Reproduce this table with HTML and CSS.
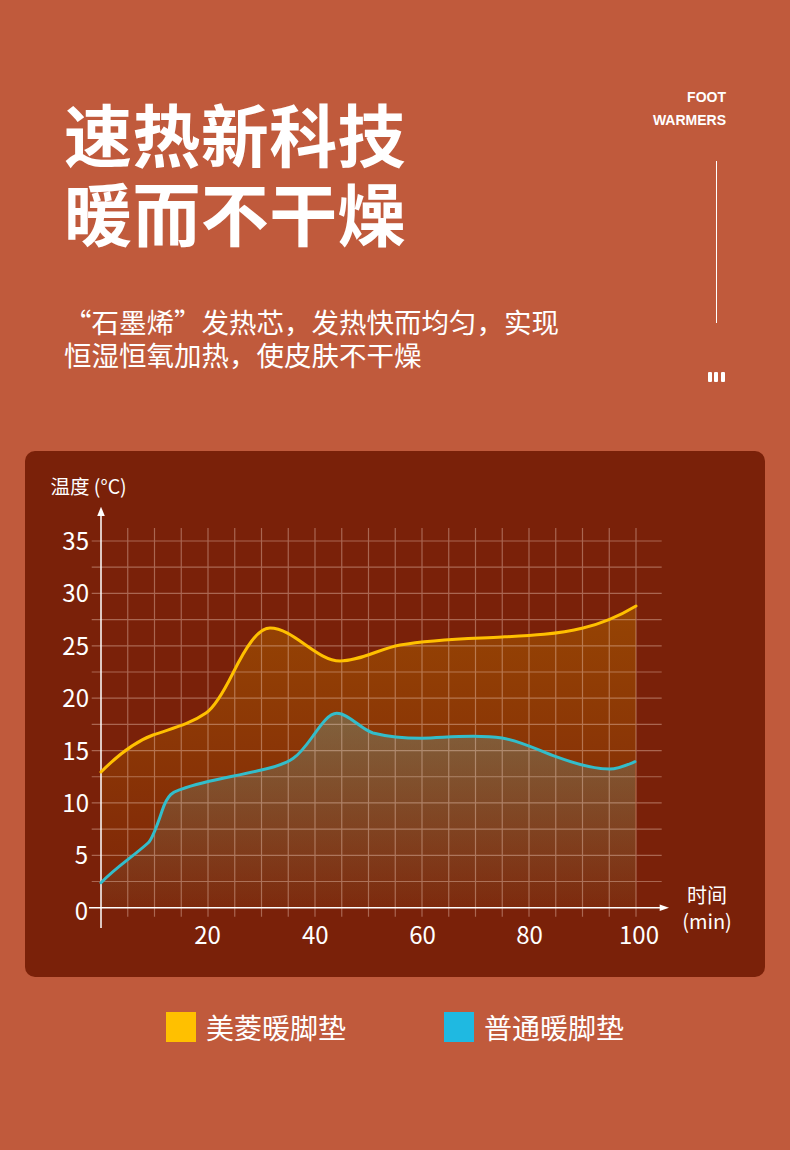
FILE: index.html
```html
<!DOCTYPE html>
<html lang="zh-CN">
<head>
<meta charset="utf-8">
<title>速热新科技</title>
<link rel="stylesheet" href="styles.css">
</head>
<body>
<div class="page">
  <header class="top">
    <div class="intro">
      <h1 class="title"><span class="title-line">速热新科技</span><span class="title-line">暖而不干燥</span></h1>
      <p class="lead">“石墨烯”发热芯，发热快而均匀，实现<br>恒湿恒氧加热，使皮肤不干燥</p>
    </div>
    <div class="brand">
      <div class="brand-name">FOOT<br>WARMERS</div>
      <div class="brand-line"></div>
      <div class="brand-bars"><span></span><span></span><span></span></div>
    </div>
  </header>

  <section class="chart-card">
    <svg class="chart" width="740" height="526" viewBox="0 0 740 526">
      <defs>
        <linearGradient id="gy" x1="0" y1="150" x2="0" y2="457" gradientUnits="userSpaceOnUse">
          <stop offset="0" stop-color="#a85a00" stop-opacity="0.62"/>
          <stop offset="1" stop-color="#a85a00" stop-opacity="0.08"/>
        </linearGradient>
        <linearGradient id="gc" x1="0" y1="260" x2="0" y2="457" gradientUnits="userSpaceOnUse">
          <stop offset="0" stop-color="#6f9a8c" stop-opacity="0.42"/>
          <stop offset="1" stop-color="#6f9a8c" stop-opacity="0.04"/>
        </linearGradient>
      </defs>

      <path class="fill-y" d="M76,321 C93.3,303.7 110.7,290.4 128,284 C145.7,277.5 163.3,274.2 181,262 C190,255.8 199,240 208,222 C220.3,197.3 232.7,177 245,177 C268.3,177 291.7,210 315,210 C335,210 355,197.6 375,194 C409,187.9 443,187.7 477,186 C504,184.65 531,183.5 558,177 C575.7,172.8 593.3,165.6 611,155 L611,456.7 L76,456.7 Z"/>
      <path class="fill-c" d="M76,431.7 C91.7,415.7 107.3,406.1 123,392 C127.7,387.8 132.3,374 137,360 C143.3,341 149.7,340.5 156,338.3 C182.8,328.9 209.5,325.7 236.3,319 C247,316.3 257.6,314.8 268.3,307.3 C274.9,302.7 281.4,294.2 288,285 C295.9,273.9 303.8,262.3 311.7,262.3 C323.8,262.3 335.9,278.4 348,282 C364.2,286.1 380.5,287.3 396.7,287.3 C423.5,286.5 450.2,283 477,287 C495,289.7 513,299 531,305.7 C548.9,312.3 566.8,318 584.7,318 C593.1,318 601.6,314.1 610,310.7 L611,456.7 L76,456.7 Z"/>

      <path class="grid" d="M102.75,77V465.7M129.5,77V465.7M156.25,77V465.7M183,77V465.7M209.75,77V465.7M236.5,77V465.7M263.25,77V465.7M290,77V465.7M316.75,77V465.7M343.5,77V465.7M370.25,77V465.7M397,77V465.7M423.75,77V465.7M450.5,77V465.7M477.25,77V465.7M504,77V465.7M530.75,77V465.7M557.5,77V465.7M584.25,77V465.7M611,77V465.7
      M66.7,430.5H636.7M66.7,404.3H636.7M66.7,378.1H636.7M66.7,351.9H636.7M66.7,325.75H636.7M66.7,299.56H636.7M66.7,273.4H636.7M66.7,247.2H636.7M66.7,221H636.7M66.7,194.8H636.7M66.7,168.6H636.7M66.7,142.4H636.7M66.7,116.2H636.7M66.7,90H636.7"/>

      <path class="axis" d="M76,62V477M64,456.7H636"/>
      <polygon class="arrow" points="76,55.7 72.2,65 79.8,65"/>
      <polygon class="arrow" points="644,456.7 634.7,453.4 634.7,460"/>

      <path class="line-y" d="M76,321 C93.3,303.7 110.7,290.4 128,284 C145.7,277.5 163.3,274.2 181,262 C190,255.8 199,240 208,222 C220.3,197.3 232.7,177 245,177 C268.3,177 291.7,210 315,210 C335,210 355,197.6 375,194 C409,187.9 443,187.7 477,186 C504,184.65 531,183.5 558,177 C575.7,172.8 593.3,165.6 611,155"/>
      <path class="line-c" d="M76,431.7 C91.7,415.7 107.3,406.1 123,392 C127.7,387.8 132.3,374 137,360 C143.3,341 149.7,340.5 156,338.3 C182.8,328.9 209.5,325.7 236.3,319 C247,316.3 257.6,314.8 268.3,307.3 C274.9,302.7 281.4,294.2 288,285 C295.9,273.9 303.8,262.3 311.7,262.3 C323.8,262.3 335.9,278.4 348,282 C364.2,286.1 380.5,287.3 396.7,287.3 C423.5,286.5 450.2,283 477,287 C495,289.7 513,299 531,305.7 C548.9,312.3 566.8,318 584.7,318 C593.1,318 601.6,314.1 610,310.7"/>

      <text class="unit" x="25.5" y="43">温度 (°C)</text>

      <g class="ylab">
        <text x="64" y="99">35</text>
        <text x="64" y="151.4">30</text>
        <text x="64" y="203.8">25</text>
        <text x="64" y="256.2">20</text>
        <text x="64" y="308.6">15</text>
        <text x="64" y="360.9">10</text>
        <text x="63" y="413.3">5</text>
        <text x="63" y="469">0</text>
      </g>
      <g class="xlab">
        <text x="182.6" y="493">20</text>
        <text x="290.3" y="493">40</text>
        <text x="397.5" y="493">60</text>
        <text x="504.5" y="493">80</text>
        <text x="614" y="493">100</text>
      </g>
      <text class="tlab" x="682" y="451.6">时间</text>
      <text class="tlab" x="682" y="478">(min)</text>
    </svg>
  </section>

  <div class="legend">
    <div class="legend-item"><span class="swatch swatch-y"></span><span class="legend-text">美菱暖脚垫</span></div>
    <div class="legend-item"><span class="swatch swatch-c"></span><span class="legend-text">普通暖脚垫</span></div>
  </div>
</div>
</body>
</html>
```

FILE: styles.css
```css
html, body {
  margin: 0;
  padding: 0;
}

body {
  background: #c05a3c;
  font-family: "Noto Sans CJK SC", "Noto Sans", sans-serif;
  color: #ffffff;
}

.page {
  width: 790px;
  height: 1150px;
  overflow: hidden;
}

.top {
  display: flex;
  justify-content: space-between;
  align-items: flex-start;
  padding: 86px 64px 0 64px;
}

.intro {
  margin-top: 7px;
}

.title {
  margin: 0;
  font-size: 68px;
  font-weight: 700;
  letter-spacing: 0.4px;
}

.title-line {
  display: block;
  height: 79px;
  line-height: 79px;
}

.lead {
  margin: 53.7px 0 0 0;
  font-size: 27.5px;
  line-height: 33.5px;
  font-weight: 400;
}

.brand {
  display: flex;
  flex-direction: column;
  align-items: flex-end;
}

.brand-name {
  font-family: "Liberation Sans", Arial, sans-serif;
  font-weight: 700;
  font-size: 14px;
  line-height: 22.6px;
  text-align: right;
}

.brand-line {
  width: 1px;
  height: 162px;
  background: #ffffff;
  margin-top: 29.7px;
  margin-right: 9px;
}

.brand-bars {
  display: flex;
  gap: 2.6px;
  margin-top: 49.6px;
  margin-right: 1px;
}

.brand-bars span {
  width: 4px;
  height: 10px;
  border-radius: 1px;
  background: #ffffff;
}

.chart-card {
  margin: 68.7px 25px 0 25px;
  height: 526px;
  background: #7a2109;
  border-radius: 10px;
  overflow: hidden;
}

.chart {
  display: block;
}

.fill-y {
  fill: url(#gy);
}

.fill-c {
  fill: url(#gc);
}

.grid {
  fill: none;
  stroke: rgba(255, 225, 210, 0.36);
  stroke-width: 1.2;
}

.axis {
  fill: none;
  stroke: #ffffff;
  stroke-width: 1.5;
}

.arrow {
  fill: #ffffff;
}

.line-y {
  fill: none;
  stroke: #ffc000;
  stroke-width: 3;
  stroke-linecap: round;
}

.line-c {
  fill: none;
  stroke: #33bdca;
  stroke-width: 3;
  stroke-linecap: round;
}

.unit {
  fill: #ffffff;
  font-size: 19.5px;
  font-family: "Noto Sans CJK SC", sans-serif;
}

.ylab text {
  fill: #ffffff;
  font-size: 24px;
  text-anchor: end;
  font-family: "Noto Sans CJK SC", sans-serif;
}

.xlab text {
  fill: #ffffff;
  font-size: 24px;
  text-anchor: middle;
  font-family: "Noto Sans CJK SC", sans-serif;
}

.tlab {
  fill: #ffffff;
  font-size: 20px;
  text-anchor: middle;
  font-family: "Noto Sans CJK SC", sans-serif;
}

.legend {
  display: flex;
  justify-content: center;
  gap: 98px;
  margin-top: 35px;
}

.legend-item {
  display: flex;
  align-items: center;
  gap: 10px;
}

.swatch {
  width: 30px;
  height: 30px;
}

.swatch-y {
  background: #ffc000;
}

.swatch-c {
  background: #1fb9e1;
}

.legend-text {
  font-size: 28px;
  line-height: 30px;
}
```
